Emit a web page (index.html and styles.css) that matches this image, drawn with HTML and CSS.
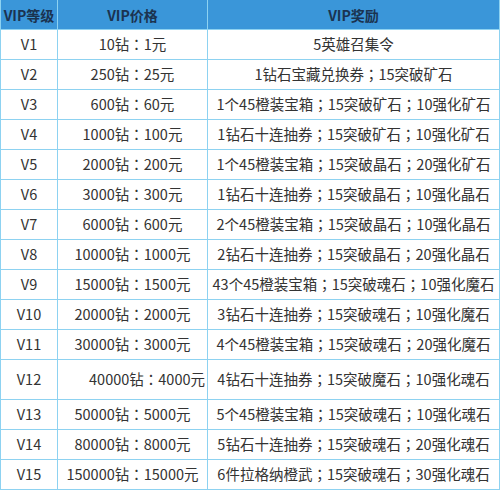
FILE: index.html
```html
<!DOCTYPE html>
<html lang="zh-CN">
<head>
<meta charset="utf-8">
<title>VIP</title>
<link rel="stylesheet" href="styles.css">
</head>
<body>
<div class="vip-table">
  <div class="cell head">VIP等级</div>
  <div class="cell head">VIP价格</div>
  <div class="cell head">VIP奖励</div>

  <div class="cell">V1</div><div class="cell">10钻<span class="p">：</span>1元</div><div class="cell">5英雄召集令</div>
  <div class="cell">V2</div><div class="cell">250钻<span class="p">：</span>25元</div><div class="cell">1钻石宝藏兑换券<span class="p">；</span>15突破矿石</div>
  <div class="cell">V3</div><div class="cell">600钻<span class="p">：</span>60元</div><div class="cell">1个45橙装宝箱<span class="p">；</span>15突破矿石<span class="p">；</span>10强化矿石</div>
  <div class="cell">V4</div><div class="cell">1000钻<span class="p">：</span>100元</div><div class="cell">1钻石十连抽券<span class="p">；</span>15突破矿石<span class="p">；</span>10强化矿石</div>
  <div class="cell">V5</div><div class="cell">2000钻<span class="p">：</span>200元</div><div class="cell">1个45橙装宝箱<span class="p">；</span>15突破晶石<span class="p">；</span>20强化矿石</div>
  <div class="cell">V6</div><div class="cell">3000钻<span class="p">：</span>300元</div><div class="cell">1钻石十连抽券<span class="p">；</span>15突破晶石<span class="p">；</span>10强化晶石</div>
  <div class="cell">V7</div><div class="cell">6000钻<span class="p">：</span>600元</div><div class="cell">2个45橙装宝箱<span class="p">；</span>15突破晶石<span class="p">；</span>10强化晶石</div>
  <div class="cell">V8</div><div class="cell">10000钻<span class="p">：</span>1000元</div><div class="cell">2钻石十连抽券<span class="p">；</span>15突破晶石<span class="p">；</span>20强化晶石</div>
  <div class="cell">V9</div><div class="cell">15000钻<span class="p">：</span>1500元</div><div class="cell">43个45橙装宝箱<span class="p">；</span>15突破魂石<span class="p">；</span>10强化魔石</div>
  <div class="cell">V10</div><div class="cell">20000钻<span class="p">：</span>2000元</div><div class="cell">3钻石十连抽券<span class="p">；</span>15突破魂石<span class="p">；</span>10强化魔石</div>
  <div class="cell">V11</div><div class="cell">30000钻<span class="p">：</span>3000元</div><div class="cell">4个45橙装宝箱<span class="p">；</span>15突破魂石<span class="p">；</span>20强化魔石</div>
  <div class="cell">V12</div><div class="cell right">40000钻<span class="p">：</span>4000元</div><div class="cell">4钻石十连抽券<span class="p">；</span>15突破魔石<span class="p">；</span>10强化魂石</div>
  <div class="cell">V13</div><div class="cell">50000钻<span class="p">：</span>5000元</div><div class="cell">5个45橙装宝箱<span class="p">；</span>15突破魂石<span class="p">；</span>10强化魂石</div>
  <div class="cell">V14</div><div class="cell">80000钻<span class="p">：</span>8000元</div><div class="cell">5钻石十连抽券<span class="p">；</span>15突破魂石<span class="p">；</span>20强化魂石</div>
  <div class="cell">V15</div><div class="cell">150000钻<span class="p">：</span>15000元</div><div class="cell">6件拉格纳橙武<span class="p">；</span>15突破魂石<span class="p">；</span>30强化魂石</div>
</div>
</body>
</html>
```

FILE: styles.css
```css
html, body {
  margin: 0;
  padding: 0;
  background: #ffffff;
}

.vip-table {
  width: 500px;
  box-sizing: border-box;
  display: grid;
  grid-template-columns: 56px 149px 291px;
  grid-template-rows: 29px repeat(11, 29px) 39px repeat(3, 29px);
  column-gap: 1px;
  row-gap: 1px;
  padding: 0 1px 1px 1px;
  background: #8dd2f1;
  font-family: "Noto Sans CJK SC", "Noto Sans", sans-serif;
  font-size: 14.5px;
  color: #333333;
}

.cell {
  background: #ffffff;
  display: flex;
  align-items: center;
  justify-content: center;
  white-space: nowrap;
  overflow: hidden;
  line-height: 1;
}

.p {
  font-family: "Noto Sans CJK TC", "Noto Sans CJK SC", sans-serif;
}

.cell.head {
  background: #3a96d9;
  color: #1b3350;
  font-weight: bold;
  font-size: 14px;
}

.cell.right {
  justify-content: flex-end;
  padding-right: 2px;
}
```
